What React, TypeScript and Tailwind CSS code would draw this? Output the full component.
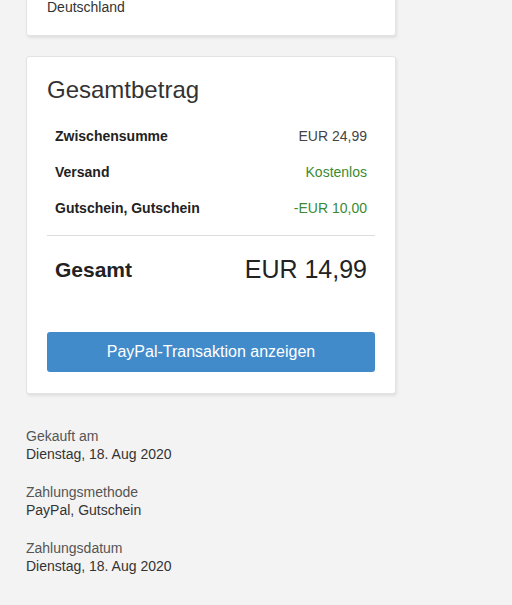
import React from "react";

const rows = [
  { label: "Zwischensumme", value: "EUR 24,99", green: false },
  { label: "Versand", value: "Kostenlos", green: true },
  { label: "Gutschein, Gutschein", value: "-EUR 10,00", green: true },
];

const info = [
  { label: "Gekauft am", value: "Dienstag, 18. Aug 2020" },
  { label: "Zahlungsmethode", value: "PayPal, Gutschein" },
  { label: "Zahlungsdatum", value: "Dienstag, 18. Aug 2020" },
];

export default function App() {
  return (
    <div
      className="min-h-[605px] w-[512px] overflow-hidden bg-[#f3f3f3] text-[#333]"
      style={{ fontFamily: '"Liberation Sans", Arial, sans-serif' }}
    >
      <div className="ml-[26px] w-[370px] flex flex-col">
        <div className="-mt-[23px] rounded-[3px] border border-[#e3e3e3] bg-white px-5 pt-5 pb-[19px] shadow-[1px_2px_3px_rgba(0,0,0,0.08)]">
          <div className="text-[14px] leading-[18px]">Deutschland</div>
        </div>

        <div className="mt-[20px] rounded-[3px] border border-[#e3e3e3] bg-white px-5 pt-[18px] pb-[21px] shadow-[1px_2px_3px_rgba(0,0,0,0.08)]">
          <h2 className="text-[24px] leading-[30px] text-[#333]">Gesamtbetrag</h2>
          <div className="mt-[13px] flex flex-col">
            {rows.map((r) => (
              <div key={r.label} className="flex h-[36px] items-center justify-between px-2">
                <span className="text-[14px] font-bold text-[#222]">{r.label}</span>
                <span className={`text-[14px] ${r.green ? "text-[#3c8a32]" : "text-[#444]"}`}>
                  {r.value}
                </span>
              </div>
            ))}
          </div>
          <div className="mt-[9px] border-t border-[#dcdcdc]" />
          <div className="flex h-[68px] items-center justify-between px-2">
            <span className="text-[21px] font-bold text-[#222]">Gesamt</span>
            <span className="text-[25px] text-[#222]">EUR 14,99</span>
          </div>
          <button className="mt-[28px] flex h-[40px] w-full items-center justify-center rounded-[3px] bg-[#428bca] text-[16px] text-white">
            PayPal-Transaktion anzeigen
          </button>
        </div>
      </div>

      <div className="ml-[26px] mt-[33px] flex flex-col gap-5">
        {info.map((i) => (
          <div key={i.label} className="flex flex-col text-[14px] leading-[18px]">
            <span className="text-[#555]">{i.label}</span>
            <span className="text-[#333]">{i.value}</span>
          </div>
        ))}
      </div>
    </div>
  );
}
